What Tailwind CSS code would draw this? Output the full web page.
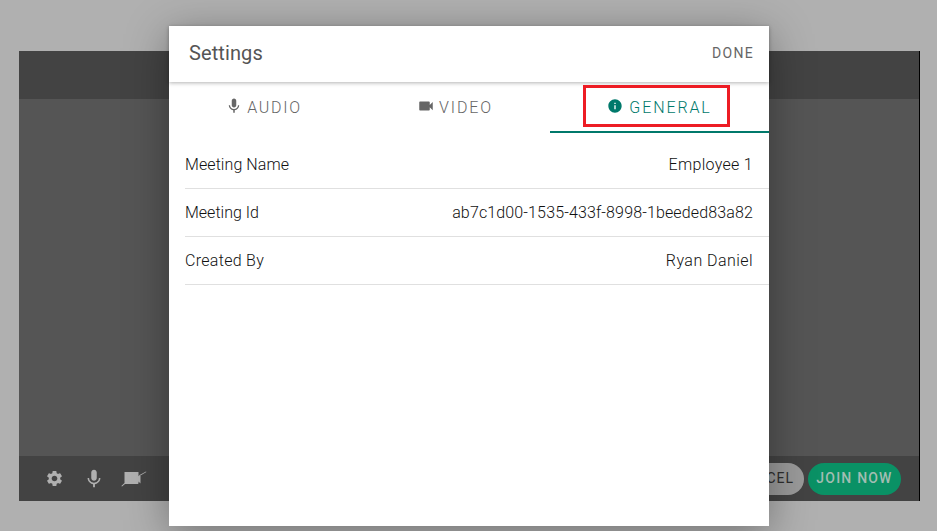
<!DOCTYPE html>
<html lang="en">
<head>
  <meta charset="UTF-8" />
  <title>Settings</title>
  <script src="https://cdn.jsdelivr.net/npm/@tailwindcss/browser@4"></script>
</head>
<body class="relative h-[531px] w-[937px] overflow-hidden bg-[#b0b0b0] font-['Roboto',sans-serif]">
  <!-- Meeting panel behind the dialog -->
  <div class="pt-[51px] pl-[19px]">
    <div class="flex h-[450px] w-[901px] flex-col border-r border-black bg-[#555555]">
      <div class="h-[48px] bg-[#434343]"></div>
      <div class="flex-1"></div>
      <div class="flex h-[45px] items-center justify-between bg-[#434343] pl-[26px] pr-[18px]">
        <div class="flex items-center text-[#b0b0b0]">
          <svg class="h-[19px] w-[19px]" viewBox="0 0 24 24" fill="currentColor"><path d="M19.14 12.94c.04-.3.06-.61.06-.94 0-.32-.02-.64-.07-.94l2.03-1.58a.49.49 0 0 0 .12-.61l-1.92-3.32a.488.488 0 0 0-.59-.22l-2.39.96c-.5-.38-1.03-.7-1.62-.94l-.36-2.54a.484.484 0 0 0-.48-.41h-3.84c-.24 0-.43.17-.47.41l-.36 2.54c-.59.24-1.13.57-1.62.94l-2.39-.96c-.22-.08-.47 0-.59.22L2.74 8.87c-.12.21-.08.47.12.61l2.03 1.58c-.05.3-.09.63-.09.94s.02.64.07.94l-2.03 1.58a.49.49 0 0 0-.12.61l1.92 3.32c.12.22.37.29.59.22l2.39-.96c.5.38 1.03.7 1.62.94l.36 2.54c.05.24.24.41.48.41h3.84c.24 0 .44-.17.47-.41l.36-2.54c.59-.24 1.13-.56 1.62-.94l2.39.96c.22.08.47 0 .59-.22l1.92-3.32c.12-.22.07-.47-.12-.61l-2.01-1.58zM12 15.6c-1.98 0-3.6-1.62-3.6-3.6s1.62-3.6 3.6-3.6 3.6 1.62 3.6 3.6-1.62 3.6-3.6 3.6z"/></svg>
          <svg class="ml-[19px] h-[22px] w-[22px]" viewBox="0 0 24 24" fill="currentColor"><path d="M12 14c1.66 0 3-1.34 3-3V5c0-1.66-1.34-3-3-3S9 3.34 9 5v6c0 1.66 1.34 3 3 3zm5.3-3c0 3-2.54 5.1-5.3 5.1S6.7 14 6.7 11H5c0 3.41 2.72 6.23 6 6.72V21h2v-3.28c3.28-.48 6-3.3 6-6.72h-1.7z"/></svg>
          <svg class="ml-[16px] h-[16px] w-[26px]" viewBox="0 0 26 16" fill="currentColor"><path d="M3.5 1H17.5V5.2L19.5 3V12.5L17.5 10.5V12C17.5 12.6 17 13 16.5 13H4L1 15.6 0.3 14.9 3.5 12V1Z"/><path d="M19.5 3.6 25 0.4 25.4 1.1 19.9 4.3Z"/></svg>
        </div>
        <div class="flex items-center gap-[4px]">
          <button class="flex h-[32px] w-[90px] items-center justify-end rounded-full bg-[#9a9a9a] pr-[10px] text-[14px] tracking-[1px] text-[#2e2e2e]">CANCEL</button>
          <button class="flex h-[32px] w-[93px] items-center justify-center rounded-full bg-[#0a9165] text-[14px] font-medium tracking-[1.2px] text-[#a3bdb3]">JOIN NOW</button>
        </div>
      </div>
    </div>
  </div>

  <!-- Settings dialog -->
  <div class="absolute left-[169px] top-[26px] flex h-[500px] w-[600px] flex-col bg-white shadow-[0_8px_40px_rgba(0,0,0,0.35)]">
    <header class="flex h-[56px] items-center justify-between pb-[2px] pl-[20px] pr-[15px] shadow-[0_1px_4px_rgba(0,0,0,0.3)]">
      <h1 class="text-[20px] tracking-[0.1px] text-[#555555]">Settings</h1>
      <button class="text-[14px] tracking-[1.3px] text-[#666666]">DONE</button>
    </header>

    <div class="relative flex h-[51px] text-[16px] font-light tracking-[1.7px] text-[#666666]">
      <div class="flex w-[200px] items-center justify-center gap-[4px] pr-[11px]">
        <svg class="mb-[4px] h-[18px] w-[18px]" viewBox="0 0 24 24" fill="currentColor"><path d="M12 14c1.66 0 3-1.34 3-3V5c0-1.66-1.34-3-3-3S9 3.34 9 5v6c0 1.66 1.34 3 3 3zm5.3-3c0 3-2.54 5.1-5.3 5.1S6.7 14 6.7 11H5c0 3.41 2.72 6.23 6 6.72V21h2v-3.28c3.28-.48 6-3.3 6-6.72h-1.7z"/></svg>
        <span>AUDIO</span>
      </div>
      <div class="flex w-[181px] items-center justify-center gap-[4px] pr-[9px]">
        <svg class="mb-[4px] h-[18px] w-[18px]" viewBox="0 0 24 24" fill="currentColor"><path d="M17 10.5V7c0-.55-.45-1-1-1H4c-.55 0-1 .45-1 1v10c0 .55.45 1 1 1h12c.55 0 1-.45 1-1v-3.5l4 4v-11l-4 4z"/></svg>
        <span class="tracking-[1.9px]">VIDEO</span>
      </div>
      <div class="flex w-[219px] items-center justify-center gap-[6px] border-b-2 border-[#00796b] pt-[2px] text-[#00796b]">
        <svg class="mb-[4px] h-[16px] w-[16px]" viewBox="0 0 24 24" fill="currentColor"><path d="M12 2C6.48 2 2 6.48 2 12s4.48 10 10 10 10-4.48 10-10S17.52 2 12 2zm1 15h-2v-6h2v6zm0-8h-2V7h2v2z"/></svg>
        <span class="tracking-[1.9px]">GENERAL</span>
      </div>
      <!-- red annotation box from the screenshot -->
      <div class="absolute left-[414px] top-[3px] h-[42px] w-[147px] border-[3px] border-[#ed1c24]"></div>
    </div>

    <div class="ml-[16px] pt-[8px] text-[16px] font-light text-[#111111]">
      <div class="flex h-[48px] items-center justify-between border-b border-[#e0e0e0] pr-[16px]">
        <span class="tracking-[0.08px]">Meeting Name</span><span class="tracking-[0.3px]">Employee 1</span>
      </div>
      <div class="flex h-[48px] items-center justify-between border-b border-[#e0e0e0] pr-[16px]">
        <span>Meeting Id</span><span class="tracking-[0.14px]">ab7c1d00-1535-433f-8998-1beeded83a82</span>
      </div>
      <div class="flex h-[48px] items-center justify-between border-b border-[#e0e0e0] pr-[16px]">
        <span class="tracking-[0.3px]">Created By</span><span class="tracking-[0.45px]">Ryan Daniel</span>
      </div>
    </div>
  </div>
</body>
</html>
